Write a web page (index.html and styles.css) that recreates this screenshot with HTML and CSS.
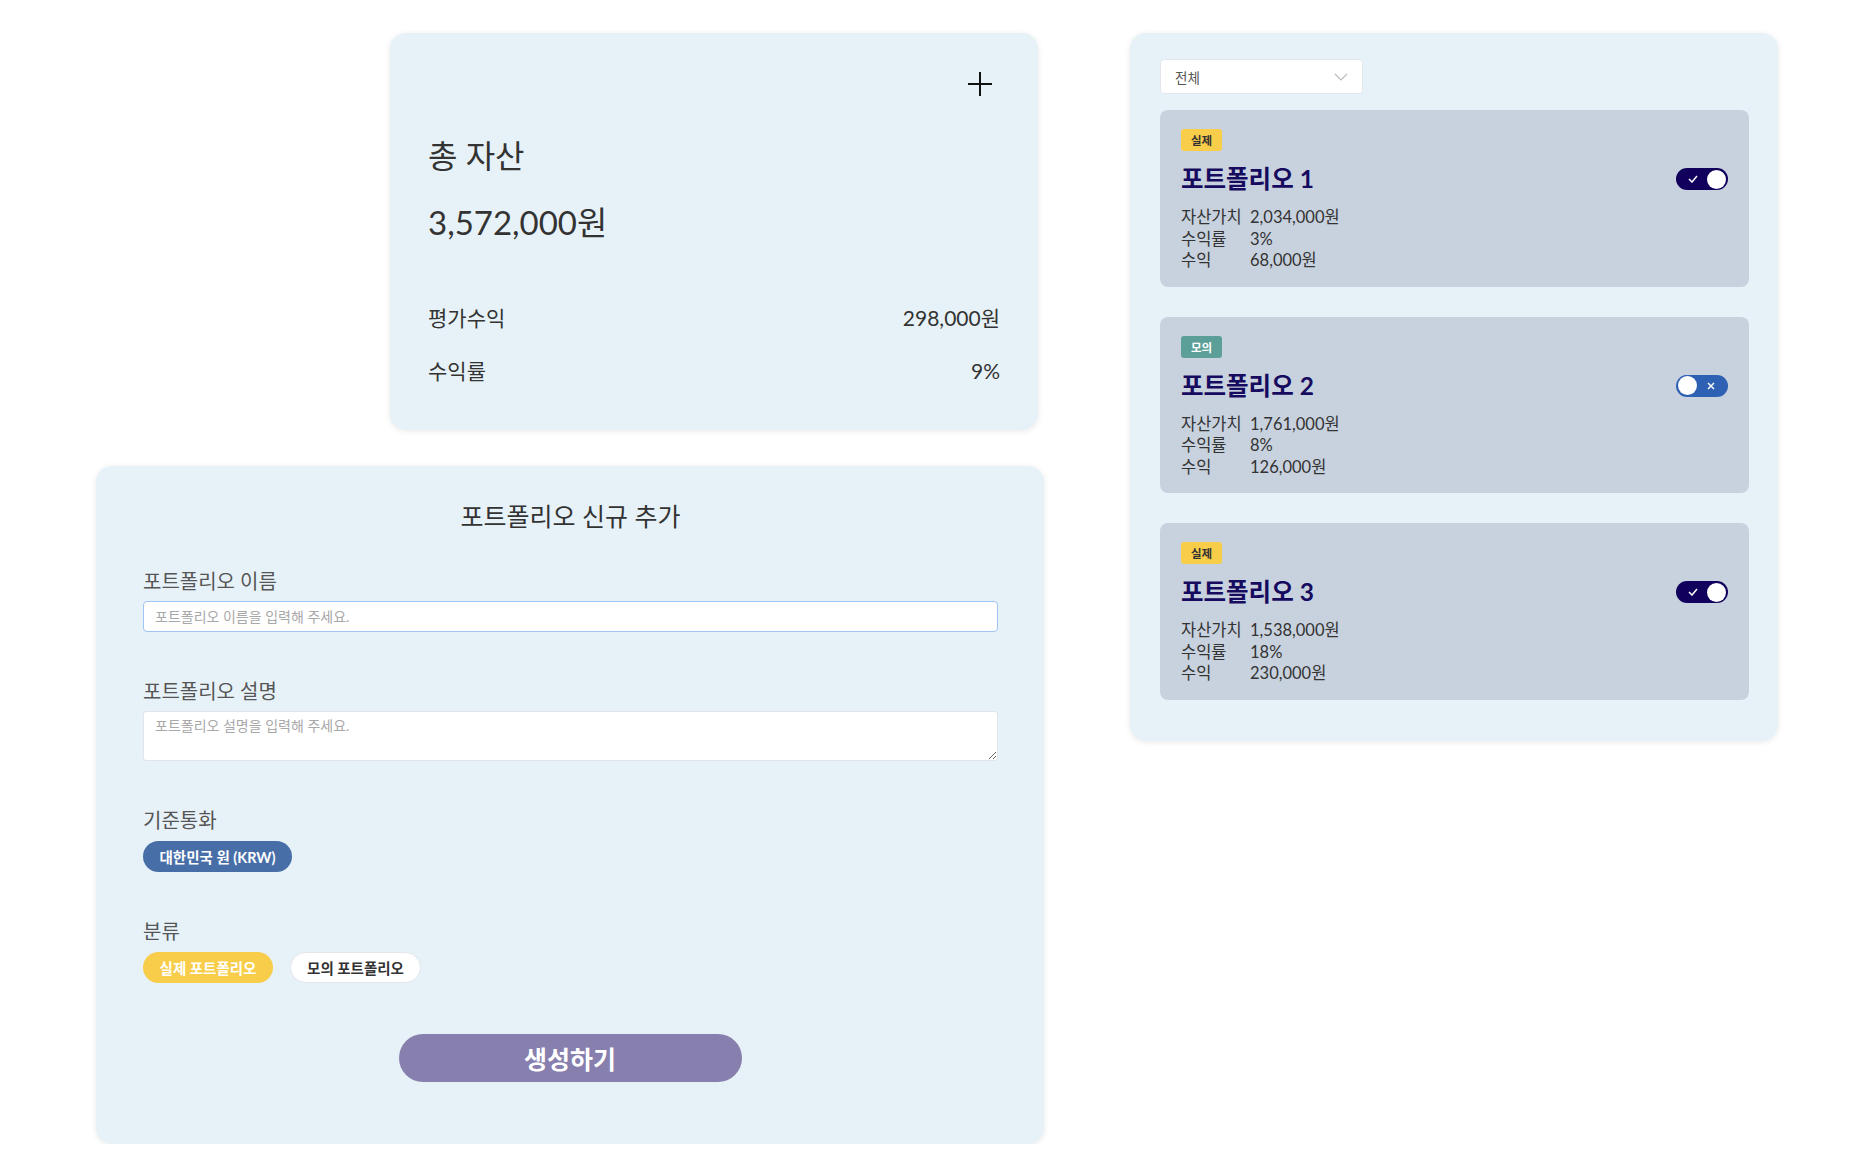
FILE: index.html
```html
<!DOCTYPE html>
<html lang="ko">
<head>
<meta charset="utf-8">
<title>포트폴리오</title>
<link rel="stylesheet" href="styles.css">
</head>
<body>
<div class="page">
  <div class="left-col">
    <section class="card summary">
      <div class="summary-head">
        <svg class="plus" width="26" height="26" viewBox="0 0 26 26"><path d="M13 1v24M1 13h24" stroke="#111" stroke-width="2" fill="none"/></svg>
      </div>
      <h2 class="summary-title">총 자산</h2>
      <div class="summary-amount">3,572,000원</div>
      <div class="summary-rows">
        <div class="summary-row"><span>평가수익</span><span>298,000원</span></div>
        <div class="summary-row"><span>수익률</span><span>9%</span></div>
      </div>
    </section>

    <section class="card form-card">
      <h2 class="form-title">포트폴리오 신규 추가</h2>
      <div class="field first">
        <label class="field-label">포트폴리오 이름</label>
        <input class="text-input" type="text" placeholder="포트폴리오 이름을 입력해 주세요.">
      </div>
      <div class="field">
        <label class="field-label">포트폴리오 설명</label>
        <textarea class="text-area" placeholder="포트폴리오 설명을 입력해 주세요."></textarea>
      </div>
      <div class="field">
        <label class="field-label">기준통화</label>
        <div class="pill-row">
          <span class="pill pill-blue">대한민국 원 (KRW)</span>
        </div>
      </div>
      <div class="field">
        <label class="field-label">분류</label>
        <div class="pill-row">
          <span class="pill pill-yellow">실제 포트폴리오</span>
          <span class="pill pill-white">모의 포트폴리오</span>
        </div>
      </div>
      <div class="submit-row">
        <button class="submit-btn">생성하기</button>
      </div>
    </section>
  </div>

  <section class="card list-card">
    <div class="select">
      <span>전체</span>
      <svg width="14" height="8" viewBox="0 0 14 8"><path d="M1 1l6 6 6-6" stroke="#bbb" stroke-width="1.2" fill="none"/></svg>
    </div>

    <div class="pf">
      <span class="badge badge-real">실제</span>
      <div class="pf-head">
        <h3 class="pf-title">포트폴리오 1</h3>
        <span class="toggle on">
          <svg class="tg-check" width="10" height="8" viewBox="0 0 10 8"><path d="M1 4l3 3 5-6" stroke="#fff" stroke-width="1.5" fill="none"/></svg>
          <span class="knob"></span>
        </span>
      </div>
      <div class="pf-stats">
        <span>자산가치</span><span>2,034,000원</span>
        <span>수익률</span><span>3%</span>
        <span>수익</span><span>68,000원</span>
      </div>
    </div>

    <div class="pf">
      <span class="badge badge-mock">모의</span>
      <div class="pf-head">
        <h3 class="pf-title">포트폴리오 2</h3>
        <span class="toggle off">
          <span class="knob"></span>
          <svg class="tg-x" width="8" height="8" viewBox="0 0 8 8"><path d="M1 1l6 6M7 1l-6 6" stroke="#fff" stroke-width="1.5" fill="none"/></svg>
        </span>
      </div>
      <div class="pf-stats">
        <span>자산가치</span><span>1,761,000원</span>
        <span>수익률</span><span>8%</span>
        <span>수익</span><span>126,000원</span>
      </div>
    </div>

    <div class="pf">
      <span class="badge badge-real">실제</span>
      <div class="pf-head">
        <h3 class="pf-title">포트폴리오 3</h3>
        <span class="toggle on">
          <svg class="tg-check" width="10" height="8" viewBox="0 0 10 8"><path d="M1 4l3 3 5-6" stroke="#fff" stroke-width="1.5" fill="none"/></svg>
          <span class="knob"></span>
        </span>
      </div>
      <div class="pf-stats">
        <span>자산가치</span><span>1,538,000원</span>
        <span>수익률</span><span>18%</span>
        <span>수익</span><span>230,000원</span>
      </div>
    </div>
  </section>
</div>
</body>
</html>
```

FILE: styles.css
```css
* { box-sizing: border-box; }
html, body { margin: 0; padding: 0; background: #fff; }
body {
  font-family: Lato, "Noto Sans CJK KR", sans-serif;
  color: #333;
}
.page {
  display: flex;
  align-items: flex-start;
  padding: 33px 0 0 96px;
  gap: 86px;
}
.left-col {
  width: 948px;
  display: flex;
  flex-direction: column;
}
.card {
  background: #e7f2f8;
  border-radius: 16px;
  box-shadow: 0 1px 6px rgba(0, 0, 0, 0.09);
}

/* summary */
.summary {
  margin-left: 294px;
  width: 648px;
  padding: 38px 38px 45px 38px;
}
.summary-head {
  display: flex;
  justify-content: flex-end;
  padding-right: 7px;
  height: 26px;
}
.plus { display: block; }
.summary-title {
  margin: 41px 0 0;
  font-size: 32px;
  font-weight: 400;
  line-height: 36px;
  color: #333;
}
.summary-amount {
  margin-top: 28px;
  font-size: 33px;
  line-height: 40px;
  color: #333;
}
.summary-rows {
  margin-top: 62px;
  display: flex;
  flex-direction: column;
  gap: 25px;
}
.summary-row {
  display: flex;
  justify-content: space-between;
  font-size: 21px;
  line-height: 28px;
  color: #333;
}

/* form */
.form-card {
  margin-top: 36px;
  width: 948px;
  padding: 35px 46px 62px 47px;
}
.form-title {
  margin: 0;
  text-align: center;
  font-size: 25px;
  font-weight: 400;
  line-height: 30px;
  color: #333;
}
.field { margin-top: 47px; display: flex; flex-direction: column; }
.field.first { margin-top: 38px; }
.field-label {
  font-size: 20px;
  line-height: 24px;
  color: #555;
  margin-bottom: 8px;
}
.text-input {
  width: 855px;
  height: 31px;
  border: 1.5px solid #9fc4f3;
  border-radius: 4px;
  background: #fff;
  padding: 0 11px;
  font-family: inherit;
  font-size: 14px;
  outline: none;
}
.text-area {
  width: 855px;
  height: 50px;
  border: 1px solid #e1e4e8;
  border-radius: 3px;
  background: #fff;
  padding: 3px 11px;
  font-family: inherit;
  font-size: 14px;
  outline: none;
}
.text-input::placeholder, .text-area::placeholder { color: #a8a8a8; }
.pill-row { display: flex; gap: 17px; margin-top: 1px; }
.pill {
  display: inline-flex;
  align-items: center;
  justify-content: center;
  height: 31px;
  border-radius: 16px;
  font-size: 14.5px;
  font-weight: 700;
}
.pill-blue { background: #486ea8; color: #fff; width: 149px; }
.pill-yellow { background: #f7cd4a; color: #fff; width: 130px; }
.pill-white { background: #fff; color: #333; width: 131px; border: 1px solid #e3e6ea; }
.submit-row { display: flex; justify-content: center; margin-top: 51px; padding-right: 1px; }
.submit-btn {
  width: 343px;
  height: 48px;
  border: none;
  border-radius: 24px;
  background: #877fad;
  color: #fff;
  font-family: inherit;
  font-size: 25px;
  font-weight: 700;
}

/* list */
.list-card {
  width: 648px;
  padding: 26px 29px 41px 30px;
  display: flex;
  flex-direction: column;
  gap: 30px;
}
.select {
  width: 203px;
  height: 35px;
  background: #fff;
  border: 1px solid #e3e8ee;
  border-radius: 4px;
  display: flex;
  align-items: center;
  justify-content: space-between;
  padding: 0 14px 0 14px;
  font-size: 13.5px;
  color: #555;
  margin-bottom: -14px;
}
.pf {
  background: #c8d2de;
  border-radius: 8px;
  padding: 19px 21px 15px 21px;
  display: flex;
  flex-direction: column;
  align-items: flex-start;
}
.badge {
  display: inline-flex;
  align-items: center;
  justify-content: center;
  width: 41px;
  height: 22px;
  border-radius: 3px;
  font-size: 11.5px;
  font-weight: 700;
}
.badge-real { background: #f7cd4a; color: #333; }
.badge-mock { background: #5c9f99; color: #fff; }
.pf-head {
  margin-top: 13px;
  width: 100%;
  height: 30px;
  display: flex;
  align-items: center;
  justify-content: space-between;
}
.pf-title {
  margin: 0;
  font-size: 24.5px;
  font-weight: 700;
  line-height: 30px;
  color: #160b5e;
}
.toggle {
  width: 52px;
  height: 22px;
  border-radius: 11px;
  display: flex;
  align-items: center;
  justify-content: space-between;
  padding: 0 2px 0 2px;
}
.toggle.on { background: #12015c; padding-left: 12px; }
.toggle.off { background: #2e61b3; padding-right: 13px; }
.knob {
  width: 19px;
  height: 19px;
  border-radius: 50%;
  background: #fff;
}
.toggle.off .knob { box-shadow: 0 0 0 1px #2e61b3; }
.tg-check, .tg-x { display: block; }
.pf-stats {
  margin-top: 13px;
  display: grid;
  grid-template-columns: 69px auto;
  font-size: 16.5px;
  line-height: 21.5px;
  color: #333;
}
```
